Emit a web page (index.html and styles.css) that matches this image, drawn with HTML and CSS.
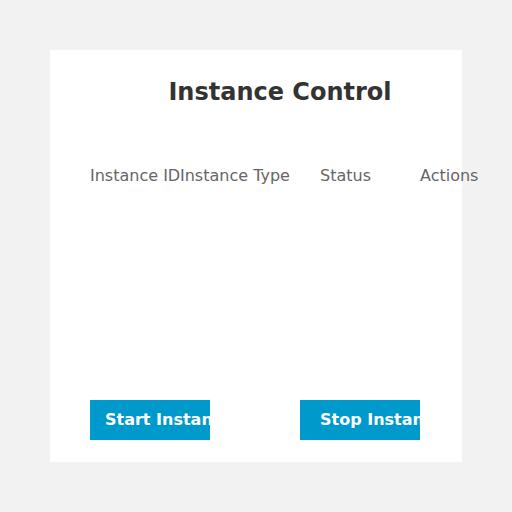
FILE: index.html
```html
<!DOCTYPE html>
<html>
<head>
<meta charset="utf-8">
<link rel="stylesheet" href="styles.css">
</head>
<body>
<div class="card">
  <h1 class="title">Instance Control</h1>
  <div class="table-head">
    <div class="th">Instance ID</div>
    <div class="th">Instance Type</div>
    <div class="th">Status</div>
    <div class="th">Actions</div>
  </div>
  <div class="actions">
    <button class="btn btn-start">Start Instance</button>
    <button class="btn btn-stop">Stop Instance</button>
  </div>
</div>
</body>
</html>
```
FILE: styles.css
```css
html, body {
  margin: 0;
  padding: 0;
}
body {
  background: #f2f2f2;
  font-family: "DejaVu Sans", sans-serif;
  padding: 50px;
  width: 412px;
}
.card {
  background: #ffffff;
  width: 412px;
  height: 412px;
  box-sizing: border-box;
  padding: 28px 40px 22px 40px;
  display: flex;
  flex-direction: column;
}
.title {
  margin: 0;
  width: 380px;
  text-align: center;
  font-size: 24px;
  line-height: 28px;
  font-weight: bold;
  color: #333333;
}
.table-head {
  margin-top: 60px;
  display: grid;
  grid-template-columns: 90px 140px 100px 60px;
  width: 390px;
  font-size: 16px;
  line-height: 19px;
  color: #666666;
}
.th {
  white-space: nowrap;
}
.actions {
  margin-top: auto;
  display: flex;
  gap: 90px;
}
.btn {
  width: 120px;
  height: 40px;
  border: none;
  margin: 0;
  background: #0099cc;
  color: #ffffff;
  font-family: "DejaVu Sans", sans-serif;
  font-size: 16px;
  font-weight: bold;
  line-height: 40px;
  text-align: left;
  white-space: nowrap;
  overflow: hidden;
  padding: 0 0 0 15px;
}
.btn-stop {
  padding-left: 20px;
}
```
